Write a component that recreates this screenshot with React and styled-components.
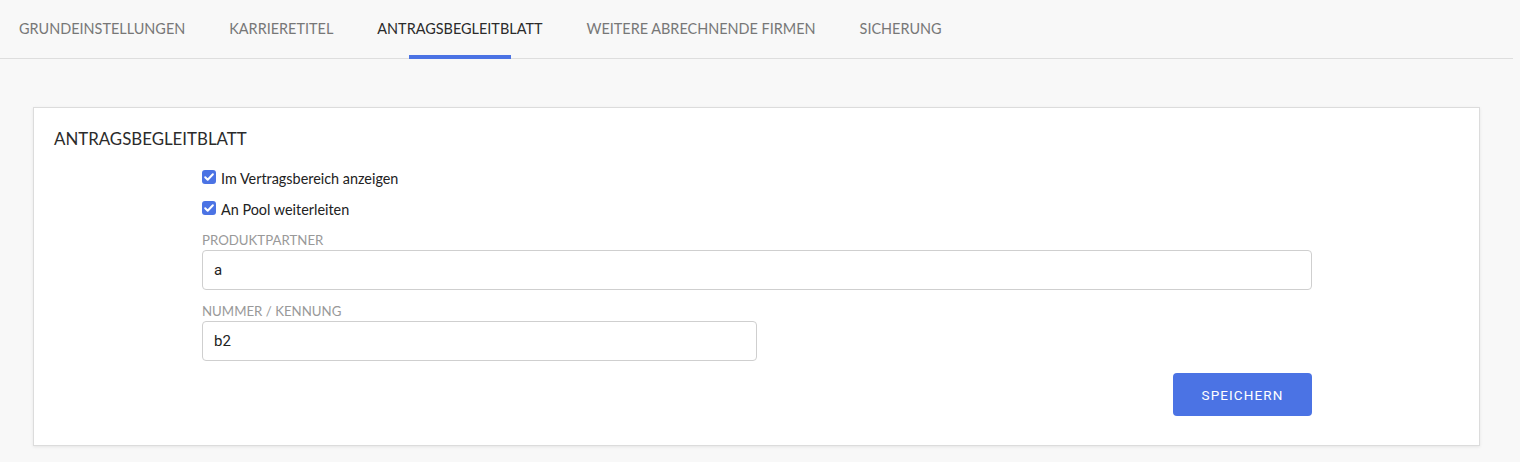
import { useState } from "react";
import styled, { createGlobalStyle } from "styled-components";

const GlobalStyle = createGlobalStyle`
  html, body {
    margin: 0;
    padding: 0;
    background: #f8f8f8;
    font-family: Lato, "Open Sans", sans-serif;
    color: #333;
  }
  * {
    box-sizing: border-box;
  }
`;

const Page = styled.div`
  width: calc(100% - 7px);
  padding-bottom: 16px;
`;

const TabBar = styled.nav`
  display: flex;
  align-items: center;
  gap: 44px;
  height: 59px;
  padding-left: 19px;
  padding-bottom: 2px;
  border-bottom: 1px solid #dedede;
`;

const Tab = styled.button`
  position: relative;
  height: 100%;
  padding: 0;
  border: none;
  background: none;
  font-family: Lato, sans-serif;
  font-size: 14.45px;
  text-transform: uppercase;
  color: ${(p) => (p.$active ? "#2b2b2b" : "#777")};
  cursor: pointer;

  &::after {
    content: "";
    display: ${(p) => (p.$active ? "block" : "none")};
    position: absolute;
    left: 50%;
    bottom: -3px;
    width: 102px;
    height: 4px;
    transform: translateX(-50%);
    background: #4b73e4;
  }
`;

const Card = styled.section`
  margin: 48px 33px 0 33px;
  padding: 21px 20px 29px 20px;
  background: #fff;
  border: 1px solid #dcdcdc;
  box-shadow: 0 1px 3px rgba(0, 0, 0, 0.08);
`;

const Title = styled.h2`
  margin: 0;
  font-size: 16.85px;
  font-weight: 400;
  line-height: 20px;
  color: #2b2b2b;
`;

const Form = styled.form`
  display: flex;
  flex-direction: column;
  margin: 19px 147px 0 148px;
`;

const CheckRow = styled.label`
  display: flex;
  align-items: center;
  gap: 5px;
  height: 20px;
  margin-bottom: 11px;
  font-size: 14.4px;
  color: #222;
  cursor: pointer;
`;

const Box = styled.input`
  appearance: none;
  width: 14px;
  height: 14px;
  margin: -3px 0 0 0;
  border-radius: 3px;
  background: #4b73e4;
  cursor: pointer;

  &:not(:checked) {
    background: #fff;
    border: 1px solid #999;
  }
  &:checked {
    background-image: url("data:image/svg+xml,%3Csvg xmlns='http://www.w3.org/2000/svg' viewBox='0 0 14 14'%3E%3Cpath d='M3.2 7.3l2.5 2.5 5.2-5.6' fill='none' stroke='white' stroke-width='2' stroke-linecap='round' stroke-linejoin='round'/%3E%3C/svg%3E");
    background-size: 14px 14px;
  }
`;

const FieldLabel = styled.div`
  margin-top: ${(p) => p.$top || 13}px;
  font-size: 13.25px;
  line-height: 16px;
  color: #999;
  text-transform: uppercase;
`;

const Input = styled.input`
  width: ${(p) => p.$width || "100%"};
  height: 40px;
  margin-top: 2px;
  padding: 0 11px;
  border: 1px solid #cfcfcf;
  border-radius: 4px;
  outline: none;
  background: #fff;
  font-family: "Helvetica Neue", Roboto, "Liberation Sans", sans-serif;
  font-size: 15px;
  color: #222;
`;

const Actions = styled.div`
  display: flex;
  justify-content: flex-end;
  margin-top: 12px;
`;

const SaveBtn = styled.button`
  width: 139px;
  height: 43px;
  border: none;
  border-radius: 4px;
  background: #4b73e4;
  color: #fff;
  font-family: Roboto, "Liberation Sans", sans-serif;
  font-size: 13.5px;
  letter-spacing: 1.1px;
  text-transform: uppercase;
  cursor: pointer;
`;

const tabs = [
  "Grundeinstellungen",
  "Karrieretitel",
  "Antragsbegleitblatt",
  "Weitere abrechnende Firmen",
  "Sicherung",
];

export default function App() {
  const [active, setActive] = useState(2);
  const [showInContract, setShowInContract] = useState(true);
  const [forwardToPool, setForwardToPool] = useState(true);
  const [partner, setPartner] = useState("a");
  const [number, setNumber] = useState("b2");

  return (
    <Page>
      <GlobalStyle />
      <TabBar>
        {tabs.map((t, i) => (
          <Tab key={t} $active={i === active} onClick={() => setActive(i)}>
            {t}
          </Tab>
        ))}
      </TabBar>

      <Card>
        <Title>ANTRAGSBEGLEITBLATT</Title>
        <Form onSubmit={(e) => e.preventDefault()}>
          <CheckRow>
            <Box
              type="checkbox"
              checked={showInContract}
              onChange={(e) => setShowInContract(e.target.checked)}
            />
            Im Vertragsbereich anzeigen
          </CheckRow>
          <CheckRow>
            <Box
              type="checkbox"
              checked={forwardToPool}
              onChange={(e) => setForwardToPool(e.target.checked)}
            />
            An Pool weiterleiten
          </CheckRow>

          <FieldLabel $top={2}>Produktpartner</FieldLabel>
          <Input value={partner} onChange={(e) => setPartner(e.target.value)} />

          <FieldLabel>Nummer / Kennung</FieldLabel>
          <Input
            $width="50%"
            value={number}
            onChange={(e) => setNumber(e.target.value)}
          />

          <Actions>
            <SaveBtn type="submit">Speichern</SaveBtn>
          </Actions>
        </Form>
      </Card>
    </Page>
  );
}
